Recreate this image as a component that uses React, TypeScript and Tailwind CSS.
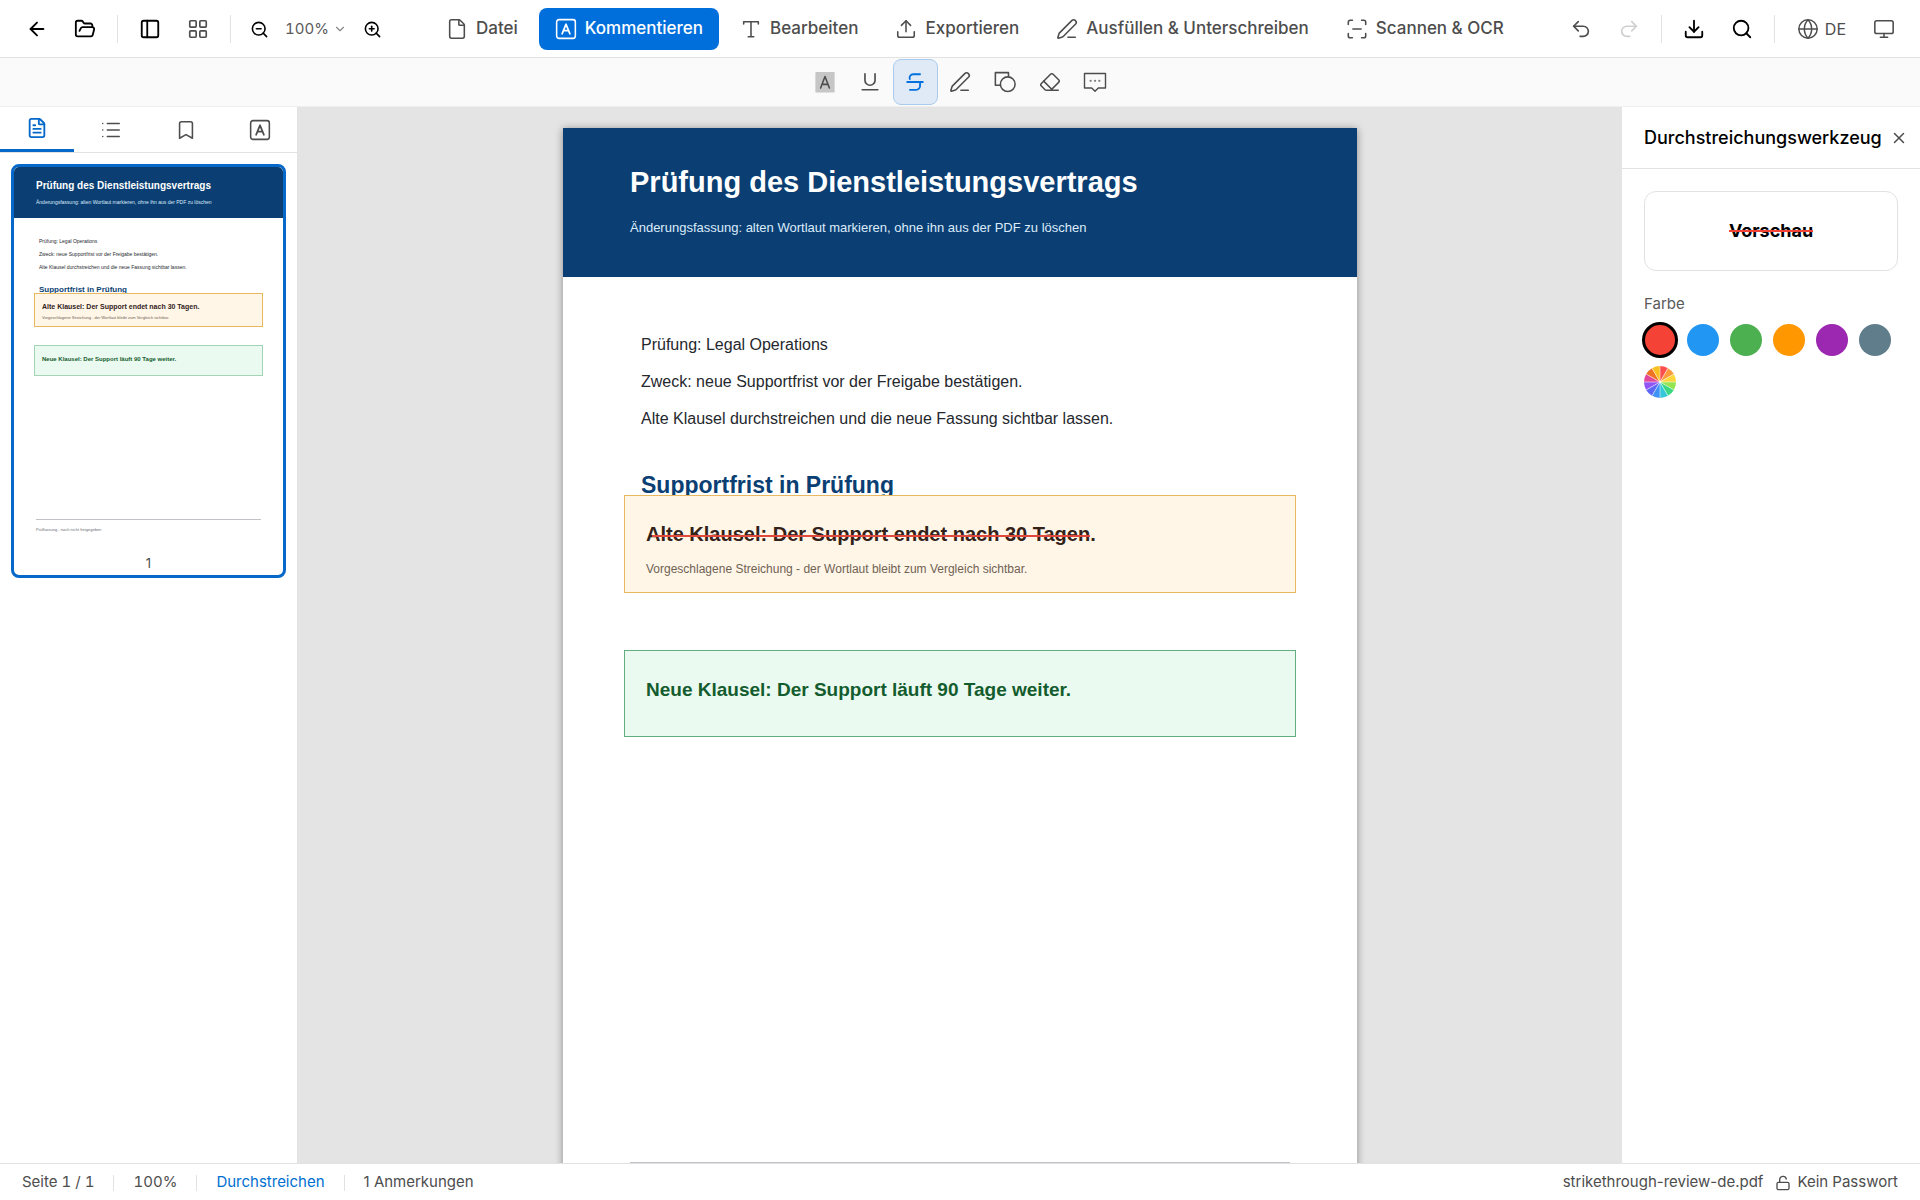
import React from "react";
import {
  ArrowLeft,
  Bookmark,
  ChevronDown,
  Download,
  Eraser,
  File,
  FileText,
  FolderOpen,
  Globe,
  LayoutGrid,
  List,
  LockOpen,
  Monitor,
  PanelLeft,
  PenLine,
  Redo2,
  Search,
  Undo2,
  Upload,
  X,
  ZoomIn,
  ZoomOut,
} from "lucide-react";

type IconProps = { className?: string };

function Svg({ className, children }: IconProps & { children: React.ReactNode }) {
  return (
    <svg
      viewBox="0 0 24 24"
      fill="none"
      stroke="currentColor"
      strokeWidth="1.5"
      strokeLinecap="round"
      strokeLinejoin="round"
      className={className}
      aria-hidden="true"
    >
      {children}
    </svg>
  );
}

const BoxedAIcon = ({ className }: IconProps) => (
  <Svg className={className}>
    <rect x="1.800" y="1.800" width="20.400" height="20.400" rx="2.5" strokeWidth="1.7" />
    <path d="M7.8 17.2 12 6.8l4.2 10.4M9.2 13.8h5.6" strokeWidth="2" />
  </Svg>
);

const TextIcon = ({ className }: IconProps) => (
  <Svg className={className}>
    <path d="M4 6.500V4h16v2.500M12 4v16.500M9 20.500h6" strokeWidth="1.7" />
  </Svg>
);

const HighlightIcon = ({ className }: IconProps) => (
  <Svg className={className}>
    <rect x="1.500" y="1" width="21" height="22.500" rx="1" fill="#c6c6c6" stroke="none" />
    <path d="M7.200 18.600 12 6l4.800 12.600M8.800 14.600h6.400" strokeWidth="1.7" />
  </Svg>
);

const UnderlineIcon = ({ className }: IconProps) => (
  <Svg className={className}>
    <path d="M6.5 3v7a5.5 5.5 0 0 0 11 0V3" strokeWidth="1.8" />
    <path d="M3.5 20.5h17" strokeWidth="1.8" />
  </Svg>
);

const StrikeIcon = ({ className }: IconProps) => (
  <Svg className={className}>
    <path d="M17.500 3.500H10a4 4 0 0 0-3.700 5.300" strokeWidth="2" />
    <path d="M3.500 12h17" strokeWidth="2" />
    <path d="M17.500 12.500v3.800a4.200 4.200 0 0 1-4.200 4.200H6.500" strokeWidth="2" />
  </Svg>
);

const ShapesIcon = ({ className }: IconProps) => (
  <Svg className={className}>
    <path d="M6.500 15.500H1.500V1.800h14.300v4" strokeWidth="1.7" />
    <circle cx="15" cy="14.400" r="8" strokeWidth="1.7" />
  </Svg>
);

const CommentIcon = ({ className }: IconProps) => (
  <Svg className={className}>
    <path d="M1.5 3.5h21v14.5h-7.2L12 21.3 8.7 18H1.5z" strokeWidth="1.4" />
    <path d="M7.6 10.8h.1M12 10.8h.1M16.3 10.8h.1" strokeWidth="2.2" opacity=".7" />
  </Svg>
);

const ScanIcon = ({ className }: IconProps) => (
  <Svg className={className}>
    <path d="M2.5 7V4.5a2 2 0 0 1 2-2H7M17 2.5h2.500a2 2 0 0 1 2 2V7M21.500 17v2.500a2 2 0 0 1-2 2H17M7 21.500H4.500a2 2 0 0 1-2-2V17M7.500 12h9" strokeWidth="1.7" />
  </Svg>
);

function IconButton({
  label,
  children,
  tone = "text-black",
  size = "size-11",
}: {
  label: string;
  children: React.ReactNode;
  tone?: string;
  size?: string;
}) {
  return (
    <button type="button" aria-label={label} className={`flex shrink-0 items-center justify-center rounded-lg ${size} ${tone}`}>
      {children}
    </button>
  );
}

const Divider = () => <div className="mx-1.5 h-7 w-px shrink-0 bg-[#e2e2e2]" />;

const modes = [
  { label: "Datei", icon: <File className="size-[22px]" strokeWidth={1.7} /> },
  { label: "Kommentieren", icon: <BoxedAIcon className="size-[22px]" />, active: true },
  { label: "Bearbeiten", icon: <TextIcon className="size-[22px]" /> },
  { label: "Exportieren", icon: <Upload className="size-[22px]" strokeWidth={1.7} /> },
  { label: "Ausfüllen & Unterschreiben", icon: <PenLine className="size-[22px]" strokeWidth={1.7} /> },
  { label: "Scannen & OCR", icon: <ScanIcon className="size-[22px]" /> },
];

function Header() {
  return (
    <header className="flex h-[58px] shrink-0 items-center border-b border-[#e2e2e2] bg-white pt-px pr-3.5 pl-[15px]">
      <div className="flex shrink-0 items-center gap-1">
        <IconButton label="Zurück"><ArrowLeft className="size-[22px]" /></IconButton>
        <IconButton label="Öffnen"><FolderOpen className="size-[22px]" strokeWidth={2} /></IconButton>
        <Divider />
        <IconButton label="Seitenleiste"><PanelLeft className="size-[22px]" strokeWidth={2} /></IconButton>
        <IconButton label="Raster" tone="text-[#4d4d4d]"><LayoutGrid className="size-[22px]" strokeWidth={1.8} /></IconButton>
        <Divider />
        <IconButton label="Verkleinern" size="h-11 w-9"><ZoomOut className="size-[19px]" /></IconButton>
        <button type="button" className="flex items-center gap-1 px-1 text-[15px] text-[#5a5a5a] tabular-nums">
          100%
          <ChevronDown className="size-3.5 text-[#888888]" strokeWidth={2} />
        </button>
        <IconButton label="Vergrößern" size="h-11 w-9"><ZoomIn className="size-[19px]" /></IconButton>
      </div>
      <nav className="flex min-w-0 flex-1 items-center justify-center gap-[5px]">
        {modes.map((m) => (
          <button
            key={m.label}
            type="button"
            className={`flex h-[42px] items-center gap-2 rounded-lg px-4 text-[17px] font-medium whitespace-nowrap ${
              m.active ? "bg-[#006fdc] text-white" : "text-[#4d4d4d]"
            }`}
          >
            {m.icon}
            {m.label}
          </button>
        ))}
      </nav>
      <div className="flex shrink-0 items-center gap-1">
        <IconButton label="Rückgängig" tone="text-[#4d4d4d]"><Undo2 className="size-[22px]" strokeWidth={1.8} /></IconButton>
        <IconButton label="Wiederholen" tone="text-[#cfcfcf]"><Redo2 className="size-[22px]" strokeWidth={1.8} /></IconButton>
        <Divider />
        <IconButton label="Herunterladen"><Download className="size-[22px]" /></IconButton>
        <IconButton label="Suchen"><Search className="size-[22px]" /></IconButton>
        <Divider />
        <button type="button" className="flex h-11 items-center gap-1.5 px-3 text-base text-[#4d4d4d]">
          <Globe className="size-[22px]" strokeWidth={1.6} />
          DE
        </button>
        <IconButton label="Ansicht" tone="text-[#4d4d4d]"><Monitor className="size-[22px]" strokeWidth={1.7} /></IconButton>
      </div>
    </header>
  );
}

const tools = [
  { label: "Hervorheben", icon: <HighlightIcon className="size-[22px]" /> },
  { label: "Unterstreichen", icon: <UnderlineIcon className="size-[22px]" /> },
  { label: "Durchstreichen", icon: <StrikeIcon className="size-[22px]" />, active: true },
  { label: "Stift", icon: <PenLine className="size-[22px]" strokeWidth={1.7} /> },
  { label: "Formen", icon: <ShapesIcon className="size-[22px]" /> },
  { label: "Radierer", icon: <Eraser className="size-[22px]" strokeWidth={1.7} /> },
  { label: "Kommentar", icon: <CommentIcon className="size-6" /> },
];

function Toolbar() {
  return (
    <div role="toolbar" aria-label="Kommentarwerkzeuge" className="flex h-[49px] shrink-0 items-center justify-center border-b border-[#efefef] bg-[#fafafa]">
      {tools.map((t) => (
        <button
          key={t.label}
          type="button"
          aria-label={t.label}
          className={`flex h-[46px] w-[45px] items-center justify-center rounded-lg border ${
            t.active ? "border-[#a9cbee] bg-[#e0eaf6] text-[#0070dc]" : "border-transparent text-[#4d4d4d]"
          }`}
        >
          {t.icon}
        </button>
      ))}
    </div>
  );
}

const sheet = {
  page: {
    root: "min-h-[1123px] w-[794px] shrink-0 shadow-[0_1px_8px_rgba(0,0,0,0.4)]",
    head: "h-[149px] px-[67px] pt-9",
    title: "text-[29px] leading-9",
    sub: "mt-[18px] text-[13px] leading-5",
    body: "px-[78px] pt-[49px] text-base leading-[37px]",
    h2: "mt-[38px] px-[78px] text-[23px] leading-5",
    oldBox: "mx-[61px] px-[21px] pt-6 pb-[15px]",
    oldText: "text-xl leading-7",
    note: "mt-[13px] text-xs",
    newBox: "mx-[61px] mt-[57px] px-[21px] pt-[25px] pb-8",
    newText: "text-[19px] leading-7",
    foot: "mx-[67px] h-[89px]",
  },
  thumb: {
    root: "h-[383px] w-full",
    head: "h-[51px] px-[22px] pt-[13px]",
    title: "text-[10px] leading-3",
    sub: "mt-[7px] text-[5px] leading-[7px]",
    body: "px-[25px] pt-[17px] text-[5px] leading-[13px]",
    h2: "mt-3 px-[25px] text-[8px] leading-[7px]",
    oldBox: "mx-5 px-[7px] pt-2 pb-[5px]",
    oldText: "text-[7px] leading-[10px]",
    note: "mt-[3px] text-[4px] leading-[6px]",
    newBox: "mx-5 mt-[18px] px-[7px] pt-2 pb-[11px]",
    newText: "text-[6px] leading-[10px]",
    foot: "mx-[22px] h-[31px] pt-[7px] text-[4px] leading-[6px]",
  },
};

function Sheet({ kind }: { kind: "page" | "thumb" }) {
  const s = sheet[kind];
  return (
    <article className={`flex flex-col bg-white font-['Liberation_Sans',Arial,sans-serif] whitespace-nowrap ${s.root}`}>
      <div className={`bg-[#0b3f73] text-white ${s.head}`}>
        <h1 className={`font-bold ${s.title}`}>Prüfung des Dienstleistungsvertrags</h1>
        <p className={`text-[#dcebfa] ${s.sub}`}>
          Änderungsfassung: alten Wortlaut markieren, ohne ihn aus der PDF zu löschen
        </p>
      </div>
      <div className={`text-[#25282d] ${s.body}`}>
        <p>Prüfung: Legal Operations</p>
        <p>Zweck: neue Supportfrist vor der Freigabe bestätigen.</p>
        <p>Alte Klausel durchstreichen und die neue Fassung sichtbar lassen.</p>
      </div>
      <h2 className={`font-bold text-[#0b3f73] ${s.h2}`}>Supportfrist in Prüfung</h2>
      <div className={`relative border border-[#e8b860] bg-[#fff6e8] ${s.oldBox}`}>
        <p className={`relative w-fit font-bold text-[#33221a] ${s.oldText}`}>
          Alte Klausel: Der Support endet nach 30 Tagen.
          {kind === "page" && <span className="absolute inset-x-1.5 top-[15px] h-0.5 bg-[#e0493d]" />}
        </p>
        <p className={`text-[#6f6253] ${s.note}`}>Vorgeschlagene Streichung - der Wortlaut bleibt zum Vergleich sichtbar.</p>
      </div>
      <div className={`border bg-[#ebfaf0] ${kind === "page" ? "border-[#62ae80]" : "border-[#a4d3b6]"} ${s.newBox}`}>
        <p className={`font-bold text-[#135c2e] ${s.newText}`}>Neue Klausel: Der Support läuft 90 Tage weiter.</p>
      </div>
      <footer className={`mt-auto border-t border-[#bfc3c8] text-[#6b7078] ${s.foot}`}>
        {kind === "thumb" && "Prüffassung - noch nicht freigegeben"}
      </footer>
    </article>
  );
}

const sideTabs = [
  { label: "Seiten", icon: <FileText className="size-[22px]" strokeWidth={2} />, active: true },
  { label: "Gliederung", icon: <List className="size-[22px]" strokeWidth={1.7} /> },
  { label: "Lesezeichen", icon: <Bookmark className="size-[22px]" strokeWidth={1.7} /> },
  { label: "Anmerkungen", icon: <BoxedAIcon className="size-[22px]" /> },
];

function Sidebar() {
  return (
    <aside className="flex w-[298px] shrink-0 flex-col border-r border-[#e2e2e2] bg-white">
      <div role="tablist" className="flex h-[46px] shrink-0 border-b border-[#e2e2e2]">
        {sideTabs.map((t) => (
          <button
            key={t.label}
            type="button"
            role="tab"
            aria-label={t.label}
            aria-selected={!!t.active}
            className={`flex flex-1 items-center justify-center ${
              t.active ? "border-b-3 border-[#0668c9] text-[#0668c9]" : "text-[#4d4d4d]"
            }`}
          >
            {t.icon}
          </button>
        ))}
      </div>
      <div className="px-[11px] pt-[11px]">
        <button type="button" aria-label="Seite 1" className="block w-full overflow-hidden rounded-lg border-3 border-[#0668c9] text-left">
          <Sheet kind="thumb" />
          <span className="block h-[25px] text-center text-[13px] leading-[26px] text-[#4d4d4d]">1</span>
        </button>
      </div>
    </aside>
  );
}

const swatches = [
  { label: "Rot", cls: "bg-[#f44336]" },
  { label: "Blau", cls: "bg-[#2196f3]" },
  { label: "Grün", cls: "bg-[#4caf50]" },
  { label: "Orange", cls: "bg-[#ff9800]" },
  { label: "Violett", cls: "bg-[#9c27b0]" },
  { label: "Blaugrau", cls: "bg-[#607d8b]" },
];

const wheel = ["#fb4f4f", "#fd9a3c", "#fdd63c", "#93e552", "#3bd884", "#35c7d9", "#3f93f4", "#5b67f6", "#9155f5", "#e0489c", "#ee7322", "#f9c022"];

function ColorWheel() {
  const point = (i: number) => {
    const a = (i * Math.PI) / 6;
    return `${16 + 16 * Math.sin(a)} ${16 - 16 * Math.cos(a)}`;
  };
  return (
    <svg viewBox="0 0 32 32" className="size-8" aria-hidden="true">
      {wheel.map((c, i) => (
        <path key={c} d={`M16 16 L${point(i)} A16 16 0 0 1 ${point(i + 1)} Z`} fill={c} />
      ))}
      {wheel.map((c, i) => (
        <path key={c} d={`M16 16 L${point(i)}`} stroke="#fff" strokeOpacity=".65" strokeWidth=".8" />
      ))}
    </svg>
  );
}

function ToolPanel() {
  return (
    <aside className="flex w-[298px] shrink-0 flex-col bg-white">
      <div className="flex h-[62px] shrink-0 items-center justify-between border-b border-[#e2e2e2] pr-3 pl-[22px]">
        <h2 className="text-lg font-medium text-black">Durchstreichungswerkzeug</h2>
        <button type="button" aria-label="Schließen" className="flex size-[18px] shrink-0 items-center justify-center text-[#4d4d4d]">
          <X className="size-[18px]" strokeWidth={2} />
        </button>
      </div>
      <div className="px-[22px] pt-[22px]">
        <div className="flex h-20 items-center justify-center rounded-xl border border-[#e2e2e2]">
          <span className="relative text-lg font-bold text-black">
            Vorschau
            <span className="absolute inset-x-0 top-[13px] h-0.5 bg-[#f44336]" />
          </span>
        </div>
        <p className="mt-[21px] text-[15px] leading-6 text-[#5a5a5a]">Farbe</p>
        <div className="mt-2 flex flex-wrap gap-x-[11px] gap-y-2.5">
          {swatches.map((s, i) => (
            <button
              key={s.label}
              type="button"
              aria-label={s.label}
              className={`rounded-full ${s.cls} ${i === 0 ? "-m-0.5 size-9 border-3 border-black" : "size-8"}`}
            />
          ))}
          <button type="button" aria-label="Eigene Farbe" className="size-8 rounded-full">
            <ColorWheel />
          </button>
        </div>
      </div>
    </aside>
  );
}

const StatusDivider = () => <div className="h-4 w-px bg-[#e2e2e2]" />;

function StatusBar() {
  return (
    <footer className="flex h-[37px] shrink-0 items-center justify-between border-t border-[#e2e2e2] bg-white px-[22px] pt-px text-[15px] text-[#4d4d4d]">
      <div className="flex items-center gap-[19px]">
        <span className="tabular-nums">Seite 1 / 1</span>
        <StatusDivider />
        <span className="tabular-nums">100%</span>
        <StatusDivider />
        <span className="text-[#0070d2]">Durchstreichen</span>
        <StatusDivider />
        <span>1 Anmerkungen</span>
      </div>
      <div className="flex items-center gap-3">
        <span>strikethrough-review-de.pdf</span>
        <span className="flex items-center gap-1.5">
          <LockOpen className="size-4" strokeWidth={2} />
          Kein Passwort
        </span>
      </div>
    </footer>
  );
}

export default function App() {
  return (
    <div className="flex h-screen flex-col overflow-hidden bg-white font-['Inter',sans-serif]">
      <Header />
      <Toolbar />
      <div className="flex min-h-0 flex-1">
        <Sidebar />
        <main className="flex min-w-0 flex-1 items-start justify-center overflow-hidden bg-[#e4e4e4] pt-[21px]">
          <Sheet kind="page" />
        </main>
        <ToolPanel />
      </div>
      <StatusBar />
    </div>
  );
}
